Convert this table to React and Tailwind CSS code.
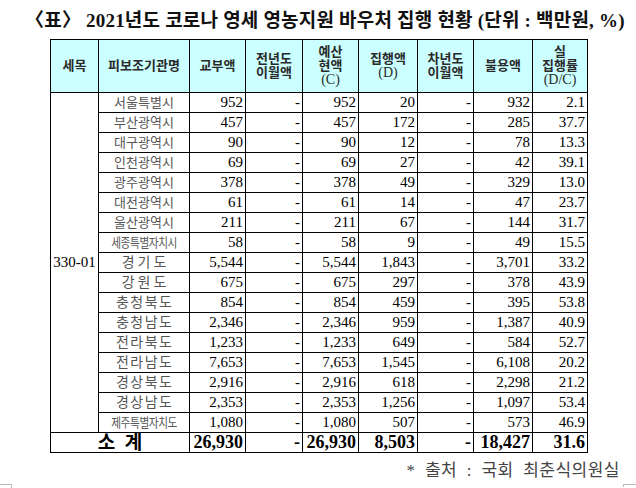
import React from "react";

const rows = [
  ["서울특별시", "952", "-", "952", "20", "-", "932", "2.1"],
  ["부산광역시", "457", "-", "457", "172", "-", "285", "37.7"],
  ["대구광역시", "90", "-", "90", "12", "-", "78", "13.3"],
  ["인천광역시", "69", "-", "69", "27", "-", "42", "39.1"],
  ["광주광역시", "378", "-", "378", "49", "-", "329", "13.0"],
  ["대전광역시", "61", "-", "61", "14", "-", "47", "23.7"],
  ["울산광역시", "211", "-", "211", "67", "-", "144", "31.7"],
  ["세종특별자치시", "58", "-", "58", "9", "-", "49", "15.5"],
  ["경기도", "5,544", "-", "5,544", "1,843", "-", "3,701", "33.2"],
  ["강원도", "675", "-", "675", "297", "-", "378", "43.9"],
  ["충청북도", "854", "-", "854", "459", "-", "395", "53.8"],
  ["충청남도", "2,346", "-", "2,346", "959", "-", "1,387", "40.9"],
  ["전라북도", "1,233", "-", "1,233", "649", "-", "584", "52.7"],
  ["전라남도", "7,653", "-", "7,653", "1,545", "-", "6,108", "20.2"],
  ["경상북도", "2,916", "-", "2,916", "618", "-", "2,298", "21.2"],
  ["경상남도", "2,353", "-", "2,353", "1,256", "-", "1,097", "53.4"],
  ["제주특별자치도", "1,080", "-", "1,080", "507", "-", "573", "46.9"],
];

const totals = ["26,930", "-", "26,930", "8,503", "-", "18,427", "31.6"];

const widths = [48, 91, 56, 57, 56, 59, 56, 59, 55];

function Name({ text }) {
  const n = text.length;
  if (n === 3)
    return <span className="text-[14px] tracking-[3px] pl-[3px]">{text}</span>;
  if (n === 4)
    return <span className="text-[14px] tracking-[1.5px] pl-[1.5px]">{text}</span>;
  if (n === 5)
    return <span className="text-[13px] tracking-[0px]">{text}</span>;
  return (
    <span className="inline-block text-[13px] tracking-[-0.5px] scale-x-[0.82] whitespace-nowrap">
      {text}
    </span>
  );
}

export default function App() {
  const font = "font-['Liberation_Serif','Noto_Sans_CJK_KR',serif]";
  const th =
    "border border-black bg-[#ccffff] text-center align-middle font-bold text-[#2a2a2a] text-[13px] leading-[14px] p-0";
  const cell = "border border-black p-0";
  const num =
    "h-[19px] overflow-hidden flex items-center justify-end pr-[2px] text-[15px] leading-[19px] text-black";
  const numT =
    "h-[19px] overflow-hidden flex items-center justify-end pr-[2px] text-[18px] leading-[19px] font-bold text-black";
  return (
    <div className={`w-[636px] h-[488px] bg-white overflow-hidden flex flex-col ${font}`}>
      <div className="pt-[8px] pl-[25px] h-[39px] text-[19px] leading-[26px] font-bold text-[#111] whitespace-nowrap tracking-[0.2px]">
        〈표〉 2021년도 코로나 영세 영농지원 바우처 집행 현황 (단위 : 백만원, %)
      </div>
      <div className="pl-[50px]">
        <table className="border-collapse table-fixed w-[537px]">
          <colgroup>
            {widths.map((w, i) => (
              <col key={i} style={{ width: w }} />
            ))}
          </colgroup>
          <thead>
            <tr>
              <th className={th}>
                <div className="h-[52px] flex items-center justify-center">세목</div>
              </th>
              <th className={th}>피보조기관명</th>
              <th className={th}>교부액</th>
              <th className={th}>
                전년도
                <br />
                이월액
              </th>
              <th className={th}>
                예산
                <br />
                현액
                <br />
                <span className="font-normal text-[14px]">(C)</span>
              </th>
              <th className={th}>
                집행액
                <br />
                <span className="font-normal text-[14px]">(D)</span>
              </th>
              <th className={th}>
                차년도
                <br />
                이월액
              </th>
              <th className={th}>불용액</th>
              <th className={th}>
                실
                <br />
                집행률
                <br />
                <span className="font-normal text-[14px]">(D/C)</span>
              </th>
            </tr>
          </thead>
          <tbody>
            {rows.map((r, i) => (
              <tr key={i}>
                {i === 0 && (
                  <td
                    rowSpan={rows.length}
                    className="border border-black p-0 text-center align-middle text-[15px] leading-[19px] text-black"
                  >
                    330-01
                  </td>
                )}
                <td className={cell}>
                  <div className="h-[19px] overflow-hidden flex items-center justify-center leading-[19px] text-[#555] whitespace-nowrap">
                    <Name text={r[0]} />
                  </div>
                </td>
                {r.slice(1).map((v, j) => (
                  <td key={j} className={cell}>
                    <div className={num}>{v}</div>
                  </td>
                ))}
              </tr>
            ))}
            <tr>
              <td colSpan={2} className={cell}>
                <div className="h-[19px] overflow-hidden flex items-center justify-center text-[19px] leading-[19px] font-bold text-black whitespace-pre">
                  소  계
                </div>
              </td>
              {totals.map((v, j) => (
                <td key={j} className={cell}>
                  <div className={numT}>{v}</div>
                </td>
              ))}
            </tr>
          </tbody>
        </table>
      </div>
      <div className="flex justify-end pr-[16px] pt-[7px]">
        <span className="text-[17px] leading-[22px] text-[#444] whitespace-pre tracking-[0.5px]">
          *  출처  :  국회  최춘식의원실
        </span>
      </div>
      <div className="flex-1" />
      <div className="flex justify-between h-[4px]">
        <div className="w-[12px] h-[4px] border-t border-r border-[#bbb]" />
        <div className="w-[13px] h-[3px] border-t border-l border-[#bbb]" />
      </div>
    </div>
  );
}
